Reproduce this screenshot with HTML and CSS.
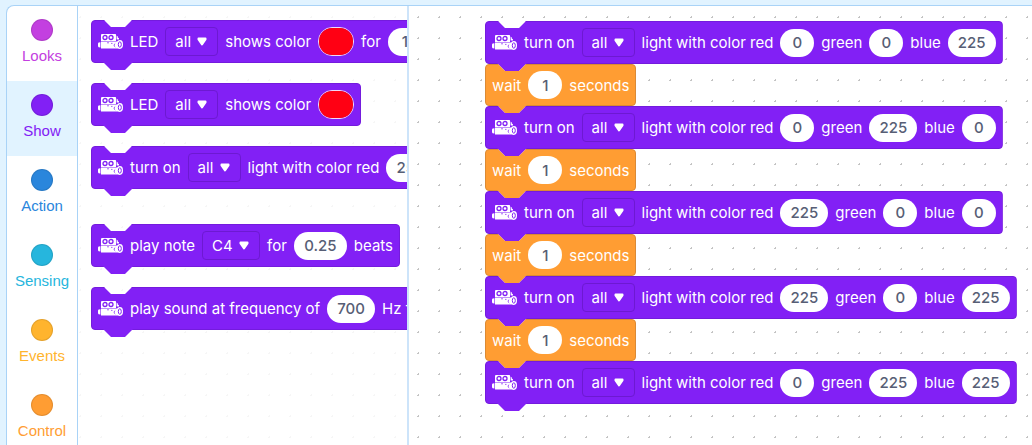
FILE: index.html
```
<!DOCTYPE html>
<html lang="en">
<head>
  <meta charset="UTF-8">
  <title>Block Editor</title>
  <link rel="stylesheet" href="styles.css">
</head>
<body>

<svg class="defs" aria-hidden="true">
  <symbol id="robot" viewBox="0 0 25 15">
    <path fill="#fff" d="M4 0H17.5Q18 0 18 1V7H3V1Q3 0 4 0Z"/>
    <circle cx="7" cy="3.5" r="2" fill="none" stroke="#8220f5" stroke-width="1.3"/>
    <circle cx="13" cy="3.5" r="2" fill="none" stroke="#8220f5" stroke-width="1.3"/>
    <path fill="#fff" d="M18.6 1.5L19.8 2.5V3.5L21 4.2V5.6H18.6Z"/>
    <path fill="#fff" d="M3 7.5H22V14.5H3ZM0 9.5Q0 8.3 2.4 8.3V13.5Q0 13.5 0 12.3Z"/>
    <path stroke="#8220f5" stroke-width=".7" fill="none" d="M9 8.8H11M13 9.4H14.5"/>
    <path stroke="#8220f5" stroke-width=".8" fill="none" d="M17.2 9.5A2 2 0 0 0 17.2 13"/>
    <ellipse cx="21.9" cy="10.5" rx="3.1" ry="4.4" fill="#fff"/>
    <ellipse cx="21.8" cy="10.5" rx="1.5" ry="2.7" fill="none" stroke="#8220f5"/>
  </symbol>
  <symbol id="arrow" viewBox="0 0 10 9">
    <path fill="#fff" stroke="#fff" stroke-linejoin="round" stroke-width="2" d="M1.5 1.5H8.5V2.5L5 7.5L1.5 2.5Z"/>
  </symbol>
</svg>

<div class="editor">
  <nav class="categories">
    <button class="category looks"><span class="dot"></span>Looks</button>
    <button class="category show active"><span class="dot"></span>Show</button>
    <button class="category action"><span class="dot"></span>Action</button>
    <button class="category sensing"><span class="dot"></span>Sensing</button>
    <button class="category events"><span class="dot"></span>Events</button>
    <button class="category control"><span class="dot"></span>Control</button>
  </nav>

  <div class="palette">
    <div class="block">
      <svg class="robot"><use href="#robot"/></svg>
      <span>LED</span>
      <span class="drop"><select aria-label="LED"><option>all</option></select><svg class="arrow"><use href="#arrow"/></svg></span>
      <span>shows color</span>
      <input class="color" type="color" value="#ff0013" aria-label="color">
      <span>for</span>
      <input class="num" type="text" value="1" aria-label="seconds">
    </div>
    <div class="block">
      <svg class="robot"><use href="#robot"/></svg>
      <span>LED</span>
      <span class="drop"><select aria-label="LED"><option>all</option></select><svg class="arrow"><use href="#arrow"/></svg></span>
      <span>shows color</span>
      <input class="color" type="color" value="#ff0013" aria-label="color">
    </div>
    <div class="block">
      <svg class="robot"><use href="#robot"/></svg>
      <span>turn on</span>
      <span class="drop"><select aria-label="light"><option>all</option></select><svg class="arrow"><use href="#arrow"/></svg></span>
      <span>light with color red</span>
      <input class="num wide" type="text" value="255" aria-label="red">
    </div>
    <div class="block group-start">
      <svg class="robot"><use href="#robot"/></svg>
      <span>play note</span>
      <span class="drop"><select class="note" aria-label="note"><option>C4</option></select><svg class="arrow"><use href="#arrow"/></svg></span>
      <span>for</span>
      <input class="num wider" type="text" value="0.25" aria-label="beats">
      <span>beats</span>
    </div>
    <div class="block">
      <svg class="robot"><use href="#robot"/></svg>
      <span>play sound at frequency of</span>
      <input class="num wide" type="text" value="700" aria-label="frequency">
      <span>Hz for</span>
    </div>
  </div>

  <main class="workspace">
    <div class="stack" id="stack"></div>
  </main>
</div>

<script>
  const colors = [
    [0, 0, 225],
    [0, 225, 0],
    [225, 0, 0],
    [225, 0, 225],
    [0, 225, 225]
  ];

  function numField(value, label) {
    const size = String(value).length > 1 ? "num wide" : "num";
    return `<input class="${size}" type="text" value="${value}" aria-label="${label}">`;
  }

  const waitBlock = `
    <div class="block wait">
      <span>wait</span>
      ${numField(1, "seconds")}
      <span>seconds</span>
    </div>
  `;

  const lightBlocks = colors.map(([red, green, blue]) => `
    <div class="block">
      <svg class="robot"><use href="#robot"/></svg>
      <span>turn on</span>
      <span class="drop"><select aria-label="light"><option>all</option></select><svg class="arrow"><use href="#arrow"/></svg></span>
      <span>light with color red</span>
      ${numField(red, "red")}
      <span>green</span>
      ${numField(green, "green")}
      <span>blue</span>
      ${numField(blue, "blue")}
    </div>
  `);

  document.getElementById("stack").innerHTML = lightBlocks.join(waitBlock);
</script>

</body>
</html>
```

FILE: styles.css
```
* {
  box-sizing: border-box;
}

body {
  margin: 0;
  height: 100vh;
  padding: 5px 0 0 6px;
  overflow: hidden;
  background: #e1f3ff;
  font-family: Inter, "Liberation Sans", sans-serif;
}

.defs {
  display: none;
}

.editor {
  display: flex;
  height: 100%;
  border: 1px solid #a9d3f7;
  border-width: 1px 0 0 1px;
  border-top-left-radius: 8px;
  overflow: hidden;
  background: #fff;
}

/* category menu */
.categories {
  flex: 0 0 71px;
  border-right: 1px solid #a9d3f7;
}

.category {
  display: flex;
  flex-direction: column;
  align-items: center;
  gap: 5px;
  width: 100%;
  height: 75px;
  padding: 13px 0 0;
  border: none;
  background: none;
  font: 15px/20px "Liberation Sans", sans-serif;
  cursor: pointer;
}

.category.active {
  background: #e1f3ff;
}

.dot {
  width: 22px;
  height: 22px;
  border: 1px solid rgba(0, 0, 0, 0.1);
  border-radius: 50%;
  background: currentColor;
}

.looks { color: #c340e0; }
.show { color: #8220f5; }
.action { color: #2a86dc; }
.sensing { color: #26b6dd; }
.events { color: #ffb42e; }
.control { color: #ff9d33; }

/* palette and workspace */
.palette {
  flex: 0 0 331px;
  display: flex;
  flex-direction: column;
  align-items: flex-start;
  gap: 20px;
  padding: 14px 0 0 13px;
  border-right: 2px solid #cde4fa;
  overflow: hidden;
  background: radial-gradient(circle, #f6f6f6 1px, transparent 1px) 13px 1px / 21px 21px;
}

.workspace {
  flex: 1;
  padding: 15px 0 0 76px;
  overflow: hidden;
  background: radial-gradient(circle, #c4c4c4 1px, transparent 1px) -1px 1px / 21px 21px;
}

.stack {
  display: flex;
  flex-direction: column;
  align-items: flex-start;
}

/* blocks */
.block {
  --fill: #8220f5;
  --edge: #741bdd;
  position: relative;
  z-index: 0;
  display: flex;
  flex: none;
  align-items: center;
  gap: 7px;
  height: 43px;
  padding: 0 7px;
  color: #fff;
  font-size: 15px;
  white-space: nowrap;
}

.block.wait {
  --fill: #ff9d33;
  --edge: #db8a35;
  height: 42px;
}

.block::before {
  content: "";
  position: absolute;
  z-index: -1;
  inset: 0;
  border: 1px solid var(--edge);
  border-radius: 4px;
  background: var(--fill);
  clip-path: polygon(0 0, 13px 0, 20px 7px, 34px 7px, 41px 0, 100% 0, 100% 100%, 0 100%);
}

.block::after {
  content: "";
  position: absolute;
  top: calc(100% - 1px);
  left: 12px;
  width: 30px;
  height: 8px;
  background: var(--fill);
  clip-path: polygon(0 0, 100% 0, 22px 100%, 8px 100%);
}

.group-start {
  margin-top: 15px;
}

.robot {
  width: 25px;
  height: 15px;
}

.drop {
  position: relative;
}

.drop select {
  display: block;
  width: 53px;
  height: 29px;
  padding: 0 0 0 9px;
  border: 1px solid #6d19d1;
  border-radius: 4px;
  appearance: none;
  background: transparent;
  color: #fff;
  font: inherit;
}

.drop .note {
  width: 58px;
}

.arrow {
  position: absolute;
  top: 10px;
  right: 11px;
  width: 10px;
  height: 9px;
  pointer-events: none;
}

.num {
  width: 34px;
  height: 28px;
  padding: 0;
  border: none;
  border-radius: 14px;
  background: #fff;
  color: #575e75;
  font: inherit;
  font-weight: 500;
  text-align: center;
}

.wide {
  width: 48px;
}

.wider {
  width: 53px;
}

.color {
  width: 36px;
  height: 29px;
  padding: 0;
  border: 1px solid #f0d8f5;
  border-radius: 14px;
  appearance: none;
  background: #ff0013;
  overflow: hidden;
}

.color::-webkit-color-swatch-wrapper {
  padding: 0;
}

.color::-webkit-color-swatch {
  border: none;
}
```
